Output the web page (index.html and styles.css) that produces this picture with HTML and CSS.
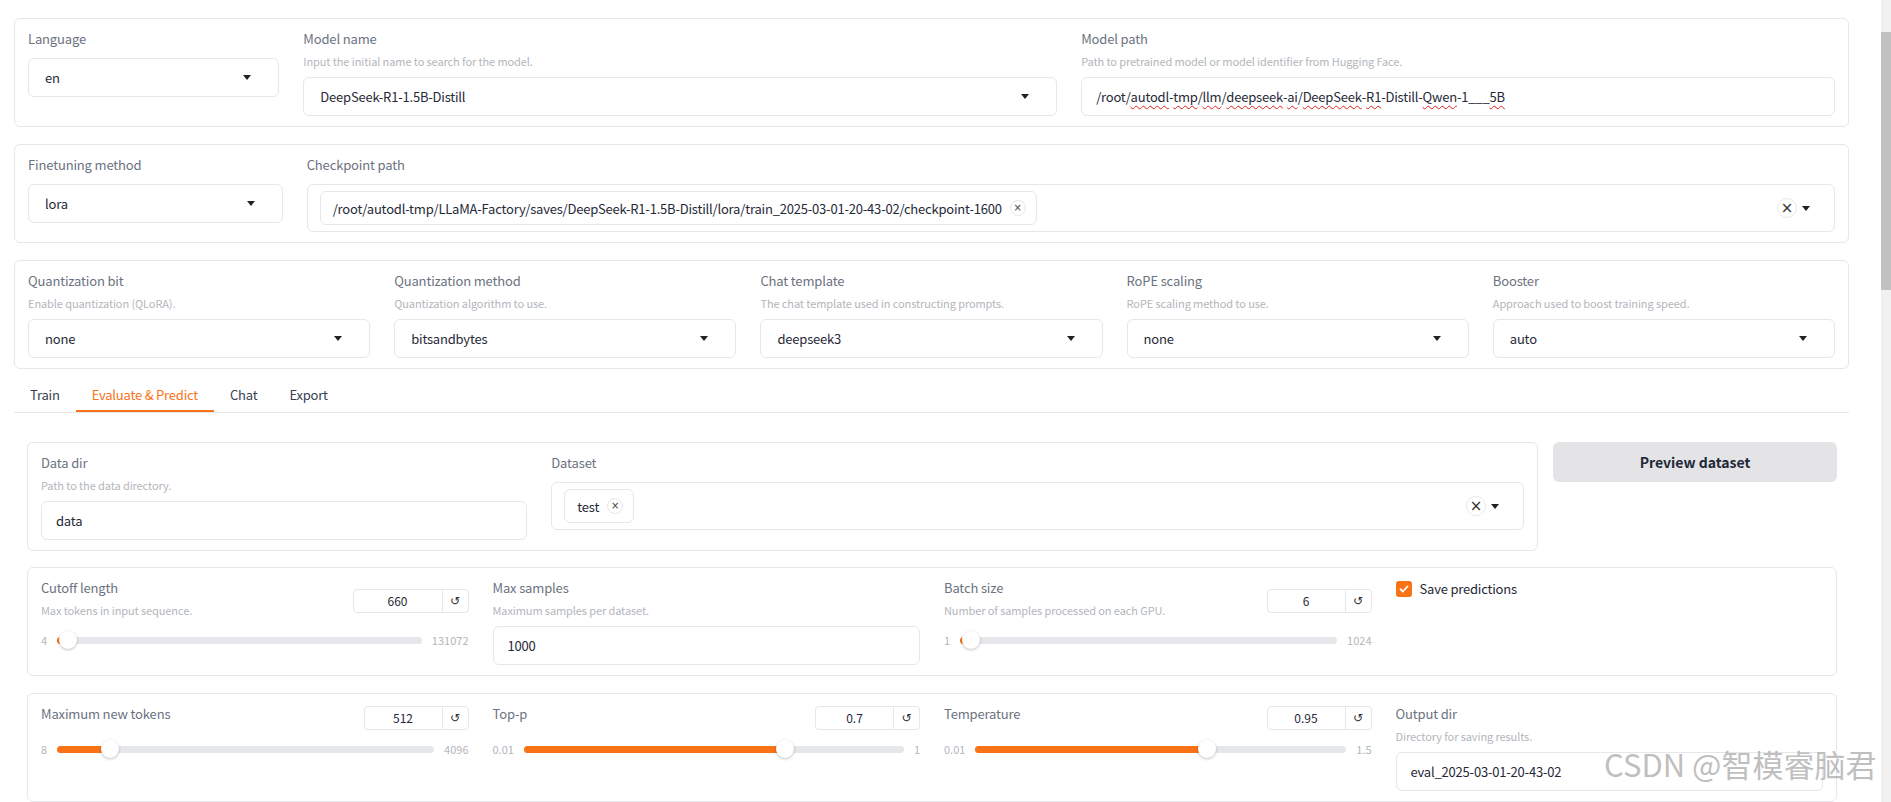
FILE: index.html
```html
<!DOCTYPE html>
<html lang="en">
<head>
    <meta charset="UTF-8">
    <meta name="viewport" content="width=device-width, initial-scale=1.0">
    <title>LLaMA Board</title>
    <link rel="stylesheet" href="styles.css">
</head>
<body>
    <div class="app">
        <!-- model -->
        <div class="box">
            <div class="field f1">
                <div class="label">Language</div>
                <div class="dropdown"><span>en</span><i class="caret"></i></div>
            </div>
            <div class="field f3">
                <div class="label">Model name</div>
                <div class="info">Input the initial name to search for the model.</div>
                <div class="dropdown"><span>DeepSeek-R1-1.5B-Distill</span><i class="caret"></i></div>
            </div>
            <div class="field f3">
                <div class="label">Model path</div>
                <div class="info">Path to pretrained model or model identifier from Hugging Face.</div>
                <div class="textbox">/root/<u>autodl</u>-<u>tmp</u>/<u>llm</u>/<u>deepseek</u>-<u>ai</u>/<u>DeepSeek</u>-<u>R1</u>-Distill-<u>Qwen</u>-1___<u>5B</u></div>
            </div>
        </div>

        <!-- adapter -->
        <div class="box">
            <div class="field f1">
                <div class="label">Finetuning method</div>
                <div class="dropdown"><span>lora</span><i class="caret"></i></div>
            </div>
            <div class="field f6">
                <div class="label">Checkpoint path</div>
                <div class="multi">
                    <div class="chip">/root/autodl-tmp/LLaMA-Factory/saves/DeepSeek-R1-1.5B-Distill/lora/train_2025-03-01-20-43-02/checkpoint-1600<span class="chip-x">&times;</span></div>
                    <div class="tools"><span class="clear">&times;</span><i class="caret"></i></div>
                </div>
            </div>
        </div>

        <!-- advanced -->
        <div class="box">
            <div class="field f1">
                <div class="label">Quantization bit</div>
                <div class="info">Enable quantization (QLoRA).</div>
                <div class="dropdown"><span>none</span><i class="caret"></i></div>
            </div>
            <div class="field f1">
                <div class="label">Quantization method</div>
                <div class="info">Quantization algorithm to use.</div>
                <div class="dropdown"><span>bitsandbytes</span><i class="caret"></i></div>
            </div>
            <div class="field f1">
                <div class="label">Chat template</div>
                <div class="info">The chat template used in constructing prompts.</div>
                <div class="dropdown"><span>deepseek3</span><i class="caret"></i></div>
            </div>
            <div class="field f1">
                <div class="label">RoPE scaling</div>
                <div class="info">RoPE scaling method to use.</div>
                <div class="dropdown"><span>none</span><i class="caret"></i></div>
            </div>
            <div class="field f1">
                <div class="label">Booster</div>
                <div class="info">Approach used to boost training speed.</div>
                <div class="dropdown"><span>auto</span><i class="caret"></i></div>
            </div>
        </div>

        <div class="tabs">
            <div class="tab">Train</div>
            <div class="tab active">Evaluate &amp; Predict</div>
            <div class="tab">Chat</div>
            <div class="tab">Export</div>
        </div>

        <div class="tabpanel">
            <div class="data-row">
                <div class="box">
                    <div class="field f1">
                        <div class="label">Data dir</div>
                        <div class="info">Path to the data directory.</div>
                        <div class="textbox">data</div>
                    </div>
                    <div class="field f2">
                        <div class="label">Dataset</div>
                        <div class="multi">
                            <div class="chip">test<span class="chip-x">&times;</span></div>
                            <div class="tools"><span class="clear">&times;</span><i class="caret"></i></div>
                        </div>
                    </div>
                </div>
                <button class="btn-preview">Preview dataset</button>
            </div>

            <div class="box">
                <div class="field f1">
                    <div class="slider-head tall">
                        <div>
                            <div class="label">Cutoff length</div>
                            <div class="info">Max tokens in input sequence.</div>
                        </div>
                        <div class="number wide"><span>660</span><b>&#8634;</b></div>
                    </div>
                    <div class="slider">
                        <span>4</span>
                        <div class="track"><div class="fill" style="width: calc(9px + 0.005 * (100% - 18px))"></div><div class="thumb" style="left: calc(9px + 0.005 * (100% - 18px))"></div></div>
                        <span>131072</span>
                    </div>
                </div>
                <div class="field f1">
                    <div class="label">Max samples</div>
                    <div class="info">Maximum samples per dataset.</div>
                    <div class="textbox">1000</div>
                </div>
                <div class="field f1">
                    <div class="slider-head tall">
                        <div>
                            <div class="label">Batch size</div>
                            <div class="info">Number of samples processed on each GPU.</div>
                        </div>
                        <div class="number"><span>6</span><b>&#8634;</b></div>
                    </div>
                    <div class="slider">
                        <span>1</span>
                        <div class="track"><div class="fill" style="width: calc(9px + 0.005 * (100% - 18px))"></div><div class="thumb" style="left: calc(9px + 0.005 * (100% - 18px))"></div></div>
                        <span>1024</span>
                    </div>
                </div>
                <div class="field f1">
                    <label class="check"><span class="checkbox"><svg viewBox="0 0 16 16" width="16" height="16"><path d="M4.5 8.2l2.3 2.3 4.7-5" fill="none" stroke="#fff" stroke-width="1.8" stroke-linecap="round" stroke-linejoin="round"/></svg></span>Save predictions</label>
                </div>
            </div>

            <div class="box">
                <div class="field f1">
                    <div class="slider-head">
                        <div class="label">Maximum new tokens</div>
                        <div class="number"><span>512</span><b>&#8634;</b></div>
                    </div>
                    <div class="slider">
                        <span>8</span>
                        <div class="track"><div class="fill" style="width: calc(9px + 0.1233 * (100% - 18px))"></div><div class="thumb" style="left: calc(9px + 0.1233 * (100% - 18px))"></div></div>
                        <span>4096</span>
                    </div>
                </div>
                <div class="field f1">
                    <div class="slider-head">
                        <div class="label">Top-p</div>
                        <div class="number"><span>0.7</span><b>&#8634;</b></div>
                    </div>
                    <div class="slider">
                        <span>0.01</span>
                        <div class="track"><div class="fill" style="width: calc(9px + 0.697 * (100% - 18px))"></div><div class="thumb" style="left: calc(9px + 0.697 * (100% - 18px))"></div></div>
                        <span>1</span>
                    </div>
                </div>
                <div class="field f1">
                    <div class="slider-head">
                        <div class="label">Temperature</div>
                        <div class="number"><span>0.95</span><b>&#8634;</b></div>
                    </div>
                    <div class="slider">
                        <span>0.01</span>
                        <div class="track"><div class="fill" style="width: calc(9px + 0.631 * (100% - 18px))"></div><div class="thumb" style="left: calc(9px + 0.631 * (100% - 18px))"></div></div>
                        <span>1.5</span>
                    </div>
                </div>
                <div class="field f1">
                    <div class="label">Output dir</div>
                    <div class="info">Directory for saving results.</div>
                    <div class="textbox">eval_2025-03-01-20-43-02</div>
                </div>
            </div>
        </div>
    </div>

    <div class="watermark">CSDN @智模睿脑君</div>

    <div class="scrollbar"><div class="scroll-thumb"></div></div>
</body>
</html>
```

FILE: styles.css
```css
:root {
    --orange: #f97316;
    --border: #e5e7eb;
    --label: #6b7280;
    --info: #b3b6bb;
    --text: #1f2937;
}

* {
    margin: 0;
    padding: 0;
    box-sizing: border-box;
}

body {
    font-family: "Noto Sans CJK SC", Lato, sans-serif;
    color: var(--text);
    background: #fff;
    width: 1891px;
    height: 802px;
    overflow: hidden;
    position: relative;
}

.app {
    padding: 18px 42px 0 14px;
}

.box {
    border: 1px solid var(--border);
    border-radius: 6px;
    padding: 10px 13px;
    display: flex;
    gap: 24px;
    align-items: flex-start;
}

.box + .box {
    margin-top: 17px;
}

.field {
    min-width: 0;
}

.f1 { flex: 1; }
.f2 { flex: 2; }
.f3 { flex: 3; }
.f6 { flex: 6; }

.label {
    font-size: 13px;
    letter-spacing: -0.15px;
    line-height: 20px;
    color: var(--label);
    margin-bottom: 9px;
    white-space: nowrap;
}

.info {
    font-size: 11px;
    letter-spacing: -0.1px;
    line-height: 18px;
    color: var(--info);
    margin: -6px 0 7px;
    white-space: nowrap;
}

.dropdown, .textbox {
    height: 39px;
    border: 1px solid var(--border);
    border-radius: 6px;
    display: flex;
    align-items: center;
    padding: 0 16px;
    font-size: 13px;
    letter-spacing: -0.2px;
    white-space: nowrap;
}

.dropdown {
    justify-content: space-between;
    padding-right: 27px;
}

.textbox {
    padding-left: 14px;
}

.textbox u {
    text-decoration: underline wavy #e11d1d;
    text-decoration-thickness: 1px;
    text-underline-offset: 3px;
    text-decoration-skip-ink: none;
}

.caret {
    width: 0;
    height: 0;
    border-left: 4.5px solid transparent;
    border-right: 4.5px solid transparent;
    border-top: 5px solid #222;
}

.multi {
    min-height: 47px;
    border: 1px solid var(--border);
    border-radius: 6px;
    padding: 6px 24px 6px 12px;
    display: flex;
    align-items: center;
}

.chip {
    height: 34px;
    border: 1px solid var(--border);
    border-radius: 6px;
    padding: 0 10px 0 12px;
    display: flex;
    align-items: center;
    gap: 8px;
    font-size: 13px;
    letter-spacing: -0.2px;
    white-space: nowrap;
}

.chip-x {
    width: 16px;
    height: 16px;
    border: 1px solid var(--border);
    border-radius: 50%;
    font-family: "DejaVu Sans", sans-serif;
    font-size: 10px;
    letter-spacing: 0;
    line-height: 14px;
    text-align: center;
    color: #444;
}

.tools {
    margin-left: auto;
    display: flex;
    align-items: center;
    gap: 5px;
}

.clear {
    width: 20px;
    height: 20px;
    border: 1px solid var(--border);
    border-radius: 50%;
    font-family: "DejaVu Sans", sans-serif;
    font-size: 15px;
    line-height: 18px;
    text-align: center;
    color: #333;
}

.tabs {
    margin-top: 9px;
    display: flex;
    border-bottom: 1px solid var(--border);
}

.tab {
    height: 34px;
    line-height: 34px;
    padding: 0 16px;
    font-size: 13px;
    letter-spacing: -0.2px;
    color: #374151;
}

.tab.active {
    color: var(--orange);
    border-bottom: 2px solid var(--orange);
    margin-bottom: -1px;
}

.tabpanel {
    padding: 29px 12px 0 13px;
}

.data-row {
    display: grid;
    grid-template-columns: 1fr 284px;
    gap: 15px;
    align-items: start;
    margin-bottom: 16px;
}

.btn-preview {
    height: 40px;
    border: none;
    border-radius: 6px;
    background: #e4e4e7;
    font-family: inherit;
    font-size: 14px;
    font-weight: bold;
    color: var(--text);
}

.slider-head {
    display: flex;
    justify-content: space-between;
    align-items: flex-start;
}

.slider-head .label {
    margin-bottom: 3px;
}

.slider-head .info {
    margin: 0;
}

.number {
    width: 105px;
    height: 24px;
    border: 1px solid var(--border);
    border-radius: 4px;
    display: flex;
    font-size: 12px;
    margin-top: 2px;
}

.slider-head.tall .number {
    margin-top: 11px;
}

.number.wide {
    width: 116px;
}

.number span {
    flex: 1;
    text-align: center;
    line-height: 22px;
}

.number b {
    width: 26px;
    border-left: 1px solid var(--border);
    text-align: center;
    line-height: 22px;
    font-weight: normal;
    font-family: "DejaVu Sans", sans-serif;
    font-size: 12px;
    color: #333;
}

.slider {
    display: flex;
    align-items: center;
    gap: 10px;
    height: 20px;
    margin-top: 9px;
    font-size: 11px;
    color: var(--info);
}

.slider-head.tall + .slider {
    margin-top: 11px;
}

.track {
    flex: 1;
    height: 7px;
    border-radius: 4px;
    background: #e5e7eb;
    position: relative;
}

.fill {
    position: absolute;
    left: 0;
    top: 0;
    bottom: 0;
    border-radius: 4px;
    background: var(--orange);
}

.thumb {
    position: absolute;
    top: 50%;
    width: 18px;
    height: 18px;
    margin: -9px 0 0 -9px;
    border-radius: 50%;
    background: #fff;
    box-shadow: 0 1px 3px rgba(0, 0, 0, 0.25);
}

.check {
    display: flex;
    align-items: center;
    gap: 8px;
    margin-top: 1px;
    font-size: 13px;
    letter-spacing: -0.2px;
    color: var(--text);
}

.checkbox {
    width: 16px;
    height: 16px;
    border-radius: 3px;
    background: var(--orange);
    display: flex;
}

.watermark {
    position: absolute;
    left: 1604px;
    top: 744px;
    font-family: "Noto Sans CJK SC", sans-serif;
    font-size: 31px;
    line-height: 40px;
    color: rgba(170, 170, 170, 0.75);
    white-space: nowrap;
}

.scrollbar {
    position: absolute;
    right: 0;
    top: 0;
    width: 10px;
    height: 802px;
    background: #f1f1f1;
}

.scroll-thumb {
    margin-top: 32px;
    height: 258px;
    background: #c1c1c1;
}
```
